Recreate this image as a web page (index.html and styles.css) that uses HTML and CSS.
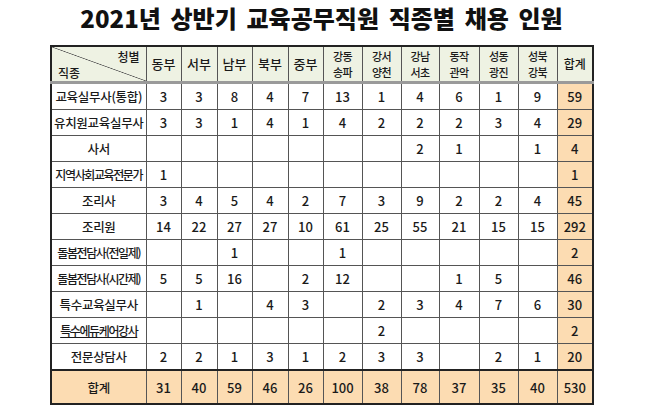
FILE: index.html
```html
<!DOCTYPE html>
<html lang="ko">
<head>
<meta charset="utf-8">
<link rel="stylesheet" href="styles.css">
</head>
<body>
<div class="page">
  <h1 class="title">2021년 상반기 교육공무직원 직종별 채용 인원</h1>
  <table class="grid">
    <colgroup>
      <col class="c-label"><col class="c35"><col class="c36"><col class="c35"><col class="c36"><col class="c35"><col class="c39"><col class="c39"><col class="c38"><col class="c40"><col class="c39"><col class="c39"><col class="c36">
    </colgroup>
    <thead>
      <tr>
        <th class="corner"><div class="corner-in"><span class="ce">청별</span><span class="cs">직종</span></div></th>
        <th>동부</th><th>서부</th><th>남부</th><th>북부</th><th>중부</th>
        <th class="two"><span class="ln">강동</span><span class="ln">송파</span></th>
        <th class="two"><span class="ln">강서</span><span class="ln">양천</span></th>
        <th class="two"><span class="ln">강남</span><span class="ln">서초</span></th>
        <th class="two"><span class="ln">동작</span><span class="ln">관악</span></th>
        <th class="two"><span class="ln">성동</span><span class="ln">광진</span></th>
        <th class="two"><span class="ln">성북</span><span class="ln">강북</span></th>
        <th class="sumh">합계</th>
      </tr>
    </thead>
    <tbody>
      <tr><td class="lbl">교육실무사(통합)</td><td>3</td><td>3</td><td>8</td><td>4</td><td>7</td><td>13</td><td>1</td><td>4</td><td>6</td><td>1</td><td>9</td><td class="sum">59</td></tr>
      <tr><td class="lbl">유치원교육실무사</td><td>3</td><td>3</td><td>1</td><td>4</td><td>1</td><td>4</td><td>2</td><td>2</td><td>2</td><td>3</td><td>4</td><td class="sum">29</td></tr>
      <tr><td class="lbl">사서</td><td></td><td></td><td></td><td></td><td></td><td></td><td></td><td>2</td><td>1</td><td></td><td>1</td><td class="sum">4</td></tr>
      <tr><td class="lbl tight">지역사회교육전문가</td><td>1</td><td></td><td></td><td></td><td></td><td></td><td></td><td></td><td></td><td></td><td></td><td class="sum">1</td></tr>
      <tr><td class="lbl">조리사</td><td>3</td><td>4</td><td>5</td><td>4</td><td>2</td><td>7</td><td>3</td><td>9</td><td>2</td><td>2</td><td>4</td><td class="sum">45</td></tr>
      <tr><td class="lbl">조리원</td><td>14</td><td>22</td><td>27</td><td>27</td><td>10</td><td>61</td><td>25</td><td>55</td><td>21</td><td>15</td><td>15</td><td class="sum">292</td></tr>
      <tr><td class="lbl tight">돌봄전담사(전일제)</td><td></td><td></td><td>1</td><td></td><td></td><td>1</td><td></td><td></td><td></td><td></td><td></td><td class="sum">2</td></tr>
      <tr><td class="lbl tight">돌봄전담사(시간제)</td><td>5</td><td>5</td><td>16</td><td></td><td>2</td><td>12</td><td></td><td></td><td>1</td><td>5</td><td></td><td class="sum">46</td></tr>
      <tr><td class="lbl">특수교육실무사</td><td></td><td>1</td><td></td><td>4</td><td>3</td><td></td><td>2</td><td>3</td><td>4</td><td>7</td><td>6</td><td class="sum">30</td></tr>
      <tr><td class="lbl tight ul">특수에듀케어강사</td><td></td><td></td><td></td><td></td><td></td><td></td><td>2</td><td></td><td></td><td></td><td></td><td class="sum">2</td></tr>
      <tr><td class="lbl">전문상담사</td><td>2</td><td>2</td><td>1</td><td>3</td><td>1</td><td>2</td><td>3</td><td>3</td><td></td><td>2</td><td>1</td><td class="sum">20</td></tr>
    </tbody>
    <tfoot>
      <tr><td class="lbl">합계</td><td>31</td><td>40</td><td>59</td><td>46</td><td>26</td><td>100</td><td>38</td><td>78</td><td>37</td><td>35</td><td>40</td><td>530</td></tr>
    </tfoot>
  </table>
</div>
</body>
</html>
```
FILE: styles.css
```css
html, body {
  margin: 0;
  padding: 0;
  background: #fff;
}
body {
  font-family: "Noto Sans CJK KR", "Noto Sans", sans-serif;
  color: #1a1a1a;
}
.page {
  display: flex;
  flex-direction: column;
  align-items: flex-start;
  width: 658px;
}
.title {
  margin: 0;
  width: 643px;
  height: 45px;
  line-height: 36px;
  text-align: center;
  font-size: 24px;
  font-weight: 900;
  word-spacing: 3px;
  letter-spacing: 0;
  color: #111;
}
.grid {
  margin-left: 50px;
  width: 542px;
  table-layout: fixed;
  border-collapse: collapse;
  border: 2px solid #222;
}
.c-label { width: 95px; }
.c35 { width: 35px; }
.c36 { width: 36px; }
.c38 { width: 38px; }
.c39 { width: 39px; }
.c40 { width: 40px; }
.grid th, .grid td {
  border: 1px solid #555;
  padding: 0;
  text-align: center;
  vertical-align: middle;
  white-space: nowrap;
  overflow: hidden;
}
.grid thead th {
  height: 34px;
  background: #eef2e3;
  font-size: 13px;
  font-weight: 500;
  line-height: 14px;
  border-bottom: 3px solid #9a9a9a;
}
.grid thead th.two {
  font-size: 11px;
  letter-spacing: -0.5px;
}
.ln {
  display: block;
  height: 16px;
  line-height: 16px;
}
.grid th.corner {
  background: linear-gradient(to top right, transparent calc(50% - 0.7px), #555 50%, transparent calc(50% + 0.7px)), #eef2e3;
}
.corner-in {
  display: flex;
  flex-direction: column;
  justify-content: space-between;
  height: 32px;
  padding: 2px 6px 0 6px;
  box-sizing: border-box;
}
.ce { align-self: flex-end; font-size: 12px; line-height: 13px; }
.cs { align-self: flex-start; font-size: 12px; line-height: 14px; }
.grid thead th.sumh {
  font-size: 12px;
}
.grid tbody td {
  height: 25px;
  font-size: 13px;
  font-weight: 500;
}
.grid td.lbl {
  font-size: 12.5px;
  font-weight: 500;
  letter-spacing: -0.3px;
}
.grid td.tight {
  letter-spacing: -1.4px;
  font-size: 12px;
}
.grid td.ul {
  text-decoration: underline;
}
.grid td.sum {
  background: #fcdcb2;
}
.grid tfoot td {
  height: 32px;
  background: #fcdcb2;
  font-size: 13px;
  font-weight: 500;
  border-top: 2px solid #222;
}
```
